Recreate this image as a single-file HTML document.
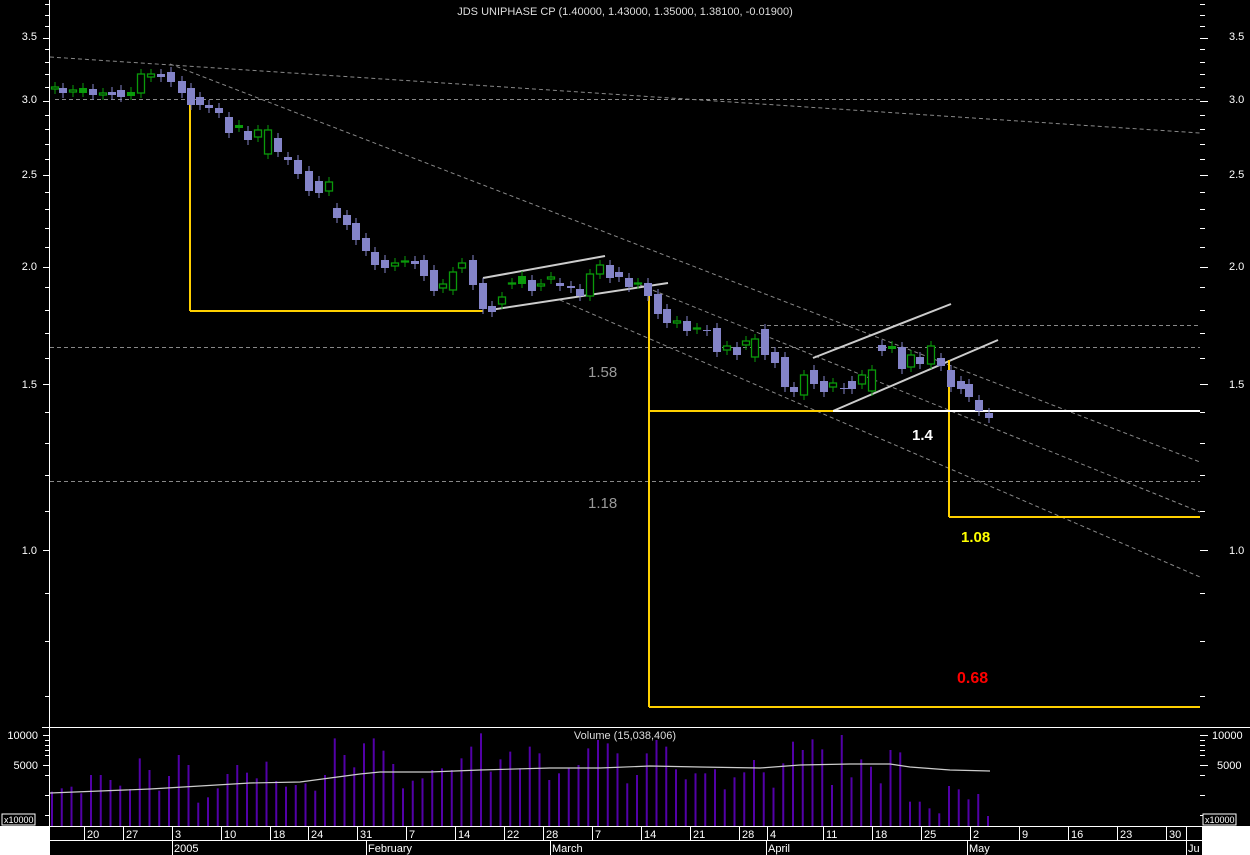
<!DOCTYPE html>
<html><head><meta charset="utf-8"><style>
html,body{margin:0;padding:0;background:#000;width:1250px;height:855px;overflow:hidden}
svg{display:block}
text{font-family:"Liberation Sans",sans-serif}
</style></head><body>
<svg id="s" width="1250" height="855" xmlns="http://www.w3.org/2000/svg">
<rect width="1250" height="855" fill="#000"/>
<rect x="0" y="826" width="50" height="29" fill="#fff"/>
<rect x="1202" y="826" width="48" height="29" fill="#fff"/>
<text x="625" y="15" fill="#ddd" font-size="11" text-anchor="middle">JDS UNIPHASE CP (1.40000, 1.43000, 1.35000, 1.38100, -0.01900)</text>
<g stroke="#888" stroke-width="1" stroke-dasharray="4,3" fill="none">
<line x1="55" y1="99.5" x2="1200" y2="99.5"/>
<line x1="50" y1="347.5" x2="1200" y2="347.5"/>
<line x1="50" y1="481.5" x2="1200" y2="481.5"/>
<line x1="760" y1="325.5" x2="1200" y2="325.5"/>
<line x1="50" y1="57" x2="1200" y2="133"/>
<line x1="170" y1="64" x2="1200" y2="462"/>
<line x1="640" y1="285" x2="1200" y2="512"/>
<line x1="560" y1="300" x2="1200" y2="577"/>
</g>
<g stroke="#ccc" stroke-width="2">
<line x1="483" y1="278" x2="605" y2="256"/>
<line x1="490" y1="310" x2="668" y2="283"/>
<line x1="813" y1="358" x2="951" y2="304"/>
<line x1="833" y1="411" x2="998" y2="340"/>
</g>
<line x1="190" y1="99" x2="190" y2="311" stroke="#ffd000" stroke-width="2"/>
<line x1="190" y1="311" x2="483" y2="311" stroke="#ffd000" stroke-width="2"/>
<line x1="649" y1="285" x2="649" y2="707" stroke="#ffd000" stroke-width="2"/>
<line x1="649" y1="707" x2="1200" y2="707" stroke="#ffd000" stroke-width="2"/>
<line x1="649" y1="411" x2="833" y2="411" stroke="#ffd000" stroke-width="2"/>
<line x1="949" y1="360" x2="949" y2="517" stroke="#ffd000" stroke-width="2"/>
<line x1="949" y1="517" x2="1200" y2="517" stroke="#ffd000" stroke-width="2"/>
<line x1="833" y1="411" x2="1200" y2="411" stroke="#fff" stroke-width="2"/>
<g id="candles"></g>
<text x="588" y="377" fill="#999" font-size="15">1.58</text>
<text x="588" y="508" fill="#999" font-size="15">1.18</text>
<text x="912" y="440" fill="#fff" font-size="15" font-weight="bold">1.4</text>
<text x="961" y="542" fill="#ff0" font-size="15" font-weight="bold">1.08</text>
<text x="957" y="683" fill="#f00" font-size="16" font-weight="bold">0.68</text>
<line x1="49.5" y1="0" x2="49.5" y2="826" stroke="#fff"/>
<line x1="42" y1="727.5" x2="1250" y2="727.5" stroke="#fff"/>
<g id="ticks" stroke="#fff" shape-rendering="crispEdges"></g>
<g fill="#fff" font-size="11">
<text x="37" y="40" text-anchor="end">3.5</text><text x="37" y="103" text-anchor="end">3.0</text>
<text x="37" y="178" text-anchor="end">2.5</text><text x="37" y="270" text-anchor="end">2.0</text>
<text x="37" y="388" text-anchor="end">1.5</text><text x="37" y="554" text-anchor="end">1.0</text>
<text x="1229" y="40">3.5</text><text x="1229" y="103">3.0</text>
<text x="1229" y="178">2.5</text><text x="1229" y="270">2.0</text>
<text x="1229" y="388">1.5</text><text x="1229" y="554">1.0</text>
<text x="38" y="739" text-anchor="end">10000</text><text x="38" y="769" text-anchor="end">5000</text>
<text x="1212" y="739">10000</text><text x="1217" y="769">5000</text>
<text x="625" y="739" text-anchor="middle" fill="#ddd">Volume (15,038,406)</text>
</g>
<rect x="2" y="814" width="33" height="11" fill="#000" stroke="#fff"/>
<text x="4" y="823" fill="#fff" font-size="9">x10000</text>
<rect x="1203" y="814" width="33" height="11" fill="#000" stroke="#fff"/>
<text x="1205" y="823" fill="#fff" font-size="9">x10000</text>
<g id="vol"></g>
<polyline fill="none" stroke="#ccc" stroke-width="1.2" points="50,793 100,791 150,789 200,786 250,783 300,782 330,778 360,774 380,772 430,772 480,770 550,768 600,768 650,766 700,767 760,768 800,765 850,764 890,764 910,767 950,770 990,771"/>
<g id="axis" shape-rendering="crispEdges"></g>
</svg>
<script>
var ns="http://www.w3.org/2000/svg";
function el(p,t,a,tx){var e=document.createElementNS(ns,t);for(var k in a)e.setAttribute(k,a[k]);if(tx)e.textContent=tx;p.appendChild(e);return e;}
var C=[[55,87,89,1],[63,88,93,0],[73,90,92,1],[83,88,92,2],[93,89,95,0],[103,93,95,1],[112,92,95,0],[121,90,97,0],[131,92,95,2],[141,74,93,1],[151,74,77,1],[161,74,77,0],[171,72,82,0],[182,81,93,0],[191,88,105,0],[200,97,105,0],[209,105,108,0],[219,108,113,0],[229,117,133,0],[239,125,127,2],[248,131,140,0],[258,130,137,1],[268,130,154,1],[278,138,152,0],[288,157,160,0],[298,160,174,0],[309,171,191,0],[319,181,193,0],[329,182,191,1],[337,208,218,0],[347,215,225,0],[356,223,240,0],[366,238,251,0],[375,252,265,0],[385,260,268,0],[395,263,266,1],[405,261,262,1],[415,261,264,0],[424,260,276,0],[434,270,291,0],[443,284,288,1],[453,272,290,1],[462,263,268,1],[473,260,285,0],[483,283,309,0],[492,306,312,0],[502,297,304,1],[512,283,284,1],[522,276,283,2],[532,280,291,0],[541,284,286,1],[551,277,279,1],[560,283,286,0],[571,286,288,0],[580,289,296,0],[590,274,296,1],[600,265,274,1],[610,265,278,0],[619,272,277,0],[629,278,287,0],[638,283,284,1],[648,283,296,0],[658,294,314,0],[667,309,323,0],[677,321,323,1],[687,321,331,0],[697,328,329,1],[707,330,331,0],[717,328,352,0],[727,346,350,1],[737,347,355,0],[746,341,345,1],[755,339,357,1],[765,329,355,0],[775,352,363,0],[785,357,387,0],[794,387,392,0],[804,375,395,1],[814,370,384,0],[824,381,392,0],[833,383,387,1],[844,388,389,0],[852,381,389,0],[862,375,384,1],[872,370,391,1],[882,345,351,0],[892,346,348,2],[902,347,369,0],[911,355,367,1],[920,357,364,0],[931,346,364,1],[941,358,366,0],[951,370,387,0],[961,381,389,0],[969,384,397,0],[979,400,411,0],[989,413,418,0]];
var g=document.getElementById("candles");
C.forEach(function(c){var x=c[0],t=c[1],b=c[2],gr=c[3];var col=gr?"#0a9a0a":"#8484c8";
el(g,"line",{x1:x,y1:t-5,x2:x,y2:b+5,stroke:col,"stroke-width":1});
var h=Math.max(b-t,1);
if(gr==1)el(g,"rect",{x:x-3.5,y:t,width:7,height:h,fill:"#000",stroke:col,"stroke-width":1.3});
else el(g,"rect",{x:x-4,y:t,width:8,height:h+(gr?1:0),fill:col});});
var V=[215,205,200,220,165,165,180,197,207,115,150,212,168,105,135,248,232,205,162,135,158,175,125,183,200,195,190,212,165,55,105,142,70,55,92,132,205,182,175,150,145,150,115,80,40,155,118,95,145,80,100,180,160,145,135,85,60,70,100,190,165,100,60,80,148,178,160,160,148,208,172,157,120,157,203,130,65,90,58,88,195,45,172,118,140,190,90,97,245,245,265,280,198,208,238,222,288];
var vg=document.getElementById("vol");
V.forEach(function(v,i){var x=52+i*(936/(V.length-1));el(vg,"line",{x1:x,y1:720+v/3,x2:x,y2:826,stroke:"#5200a8","stroke-width":2});});
var tk=document.getElementById("ticks");
for(var p=0.6;p<3.85;p+=0.1){var y=Math.round(550-409*Math.log(p))+0.5;if(y<2||y>724)continue;var maj=Math.abs(p*2-Math.round(p*2))<0.01;
el(tk,"line",{x1:maj?43:45,y1:y,x2:49,y2:y});el(tk,"line",{x1:1200,y1:y,x2:maj?1208:1205,y2:y});}
[735,740,745,750,755,765,775,795,815].forEach(function(y){var m=(y==735||y==765);el(tk,"line",{x1:m?43:45,y1:y+.5,x2:49,y2:y+.5});el(tk,"line",{x1:1200,y1:y+.5,x2:m?1208:1205,y2:y+.5});});
var ax=document.getElementById("axis");
el(ax,"line",{x1:50,y1:826.5,x2:1250,y2:826.5,stroke:"#fff"});
el(ax,"line",{x1:50,y1:840.5,x2:1202,y2:840.5,stroke:"#fff"});
var D=[["20",84],["27",123],["3",172],["10",221],["18",270],["24",308],["31",357],["7",406],["14",455],["22",504],["28",543],["7",592],["14",641],["21",690],["28",739],["4",767],["11",823],["18",872],["25",921],["2",970],["9",1019],["16",1068],["23",1117],["30",1166]];
D.forEach(function(d){el(ax,"line",{x1:d[1]+.5,y1:826,x2:d[1]+.5,y2:840,stroke:"#fff"});el(ax,"text",{x:d[1]+3,y:838,fill:"#fff","font-size":11},d[0]);});
el(ax,"line",{x1:1186.5,y1:826,x2:1186.5,y2:840,stroke:"#fff"});
[["2005",172],["February",366],["March",550],["April",766],["May",967],["Ju",1186]].forEach(function(m){el(ax,"line",{x1:m[1]+.5,y1:840,x2:m[1]+.5,y2:855,stroke:"#fff"});el(ax,"text",{x:m[1]+2,y:852,fill:"#fff","font-size":11},m[0]);});
el(ax,"line",{x1:1202.5,y1:826,x2:1202.5,y2:855,stroke:"#fff"});
</script>
</body></html>
